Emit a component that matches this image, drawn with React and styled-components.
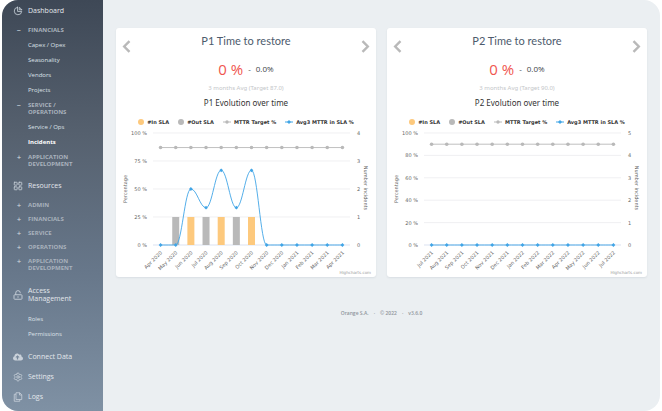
import React from "react";
import styled, { createGlobalStyle } from "styled-components";
import { FaCloudUploadAlt } from "react-icons/fa";
import { HiOutlineChartPie } from "react-icons/hi";
import { LayoutGrid, Settings } from "lucide-react";

const GlobalStyle = createGlobalStyle`
  * { box-sizing: border-box; }
  body { margin: 0; background: #fff; font-family: "Open Sans", "Noto Sans", sans-serif; }
  h2, h3, p { margin: 0; font-weight: 400; }
`;

const Shell = styled.div`
  display: flex;
  min-height: 100vh;
  margin: 0 2px;
  border-radius: 16px;
  overflow: hidden;
  background: #ebeff2;
`;

const Sidebar = styled.nav`
  flex: 0 0 101px;
  padding: 1px 0 4px;
  background: linear-gradient(#3e4856, #56616f 33%, #67778a 66%, #7f91a4);
`;

const NavLink = styled.a`
  display: flex;
  align-items: center;
  min-height: ${(p) => (p.$tall ? "24px" : "20px")};
  padding-left: 11px;
  gap: 5px;
  color: #e3e7ec;
  font-size: 7px;
  line-height: 8px;
  text-decoration: none;

  svg {
    flex: 0 0 10px;
    color: #c9d1da;
  }
`;

const Section = styled.div`
  padding: ${(p) => p.$pad || "0"};
`;

const GroupButton = styled.button`
  display: flex;
  width: 100%;
  gap: 6px;
  padding: ${(p) => (p.$tight ? "3px" : "4px")} 0 4px 15px;
  border: 0;
  background: none;
  color: #a9b2bd;
  font: 700 6px/7px "Open Sans", sans-serif;
  text-align: left;
  text-transform: uppercase;
`;

const Sign = styled.span`
  flex: 0 0 5px;
  font-size: 7px;
  color: #bcc4cd;
`;

const SubLink = styled.a`
  display: block;
  padding-left: 26px;
  color: ${(p) => (p.$active ? "#fff" : "#dde2e8")};
  font: ${(p) => (p.$active ? 700 : 400)} 6px/15px "Open Sans", sans-serif;
  text-decoration: none;
`;

const Main = styled.main`
  flex: 1;
  min-width: 0;
  padding: 28px 13px 0;
`;

const Cards = styled.div`
  display: grid;
  grid-template-columns: 1fr 1fr;
  gap: 11px;
`;

const Card = styled.section`
  display: flex;
  flex-direction: column;
  border-radius: 3px;
  background: #fff;
  box-shadow: 0 1px 2px rgba(60, 80, 100, 0.1);
`;

const CardHead = styled.header`
  display: flex;
  justify-content: space-between;
  padding: 6px 6px 0;
`;

const ArrowButton = styled.button`
  display: flex;
  align-items: flex-end;
  height: 19px;
  padding: 0;
  border: 0;
  background: none;
`;

const CardTitle = styled.h2`
  color: #4d5b6d;
  font-family: Lato, "Open Sans", sans-serif;
  font-size: 11px;
  line-height: 14px;
`;

const Score = styled.p`
  display: flex;
  justify-content: center;
  align-items: center;
  gap: 5px;
  padding-top: 7px;
  color: #3d434a;
  font-size: 8px;
  line-height: 18px;
`;

const ScoreValue = styled.strong`
  color: #f0564f;
  font-size: 15px;
  font-weight: 400;
`;

const Note = styled.p`
  padding-top: 5px;
  color: #c4c6c9;
  font-family: "Noto Sans", sans-serif;
  font-size: 6px;
  line-height: 10px;
  text-align: center;
`;

const ChartTitle = styled.h3`
  padding-top: 4px;
  color: #333;
  font-family: "Noto Sans", sans-serif;
  font-size: 8px;
  line-height: 12px;
  text-align: center;
`;

const Legend = styled.ul`
  display: flex;
  justify-content: center;
  gap: 9px;
  margin: 8px 0 0;
  padding: 0;
  list-style: none;
  color: #333;
  font-family: "DejaVu Sans", sans-serif;
  font-size: 5px;
  font-weight: 700;
  line-height: 10px;
`;

const LegendItem = styled.li`
  display: flex;
  align-items: center;
  gap: 3px;
  white-space: nowrap;
`;

const Dot = styled.span`
  width: 6px;
  height: 6px;
  border-radius: 50%;
  background: ${(p) => p.$color};
`;

const Plot = styled.svg`
  display: block;
  width: 100%;
  height: auto;
  font-family: "DejaVu Sans", sans-serif;
  font-size: 5px;
  fill: #666;
`;

const Footer = styled.footer`
  display: flex;
  justify-content: center;
  gap: 5px;
  padding-top: 31px;
  color: #8f959c;
  font-size: 5px;
  font-weight: 600;
  line-height: 10px;
`;

const GREY = "#b9b9b9";
const ORANGE = "#fdc97d";
const BLUE = "#41a5e6";

function LockIcon() {
  return (
    <svg width="10" height="10" viewBox="0 0 20 20" fill="none" stroke="currentColor" strokeWidth="1.8" aria-hidden="true">
      <rect x="2" y="9.5" width="16" height="9" rx="1.5" />
      <path d="M5.5 9.5V6a4.5 4.5 0 0 1 9-.5v1" />
      <path d="M10 12.5v3" />
    </svg>
  );
}

function PagesIcon() {
  return (
    <svg width="10" height="10" viewBox="0 0 20 20" fill="none" stroke="currentColor" strokeWidth="1.6" strokeLinejoin="round" aria-hidden="true">
      <path d="M6 1.5h7.5l4 4V15H6z" />
      <path d="M13 1.5V6h4.5" />
      <path d="M6 4.5H2.5v14h11V15" />
    </svg>
  );
}

function Chevron({ flip }) {
  return (
    <svg width="9" height="13" viewBox="0 0 9 13" aria-hidden="true">
      <path
        d={flip ? "M1.5 1.2 6.8 6.5 1.5 11.8" : "M7.5 1.2 2.2 6.5 7.5 11.8"}
        fill="none"
        stroke="#b9b9b9"
        strokeWidth="2.4"
      />
    </svg>
  );
}

function LineKey({ color, diamond }) {
  return (
    <svg width="8" height="6" viewBox="0 0 8 6" aria-hidden="true">
      <path d="M0 3H8" stroke={color} strokeWidth="1" />
      {diamond ? (
        <path d="M4 1 6 3 4 5 2 3Z" fill={color} />
      ) : (
        <circle cx="4" cy="3" r="1.7" fill={color} />
      )}
    </svg>
  );
}

const LEFT = 37;
const STEP = 197 / 13;
const TOP = 6;
const HEIGHT = 112;
const BASE = TOP + HEIGHT;
const xAt = (i) => LEFT + STEP * (i + 0.5);
const yAt = (v) => BASE - (v / 100) * HEIGHT;

/* Smooth curve through the points that never overshoots a peak or a trough. */
function splinePath(points) {
  let d = `M${points[0][0]} ${points[0][1]}`;
  let out = points[0];
  for (let i = 1; i < points.length; i++) {
    const [x, y] = points[i];
    const [px, py] = points[i - 1];
    const next = points[i + 1];
    let left = [x, y];
    let right = [x, y];
    if (next) {
      const [nx, ny] = next;
      left = [(1.5 * x + px) / 2.5, (1.5 * y + py) / 2.5];
      right = [(1.5 * x + nx) / 2.5, (1.5 * y + ny) / 2.5];
      const shift =
        ((right[1] - left[1]) * (right[0] - x)) / (right[0] - left[0]) * -1 + y - right[1] +
        (right[1] - left[1]);
      const slope = (right[1] - left[1]) / (right[0] - left[0]);
      left[1] = y - slope * (x - left[0]);
      right[1] = Number.isFinite(shift) ? y + slope * (right[0] - x) : y;
      const hiL = Math.max(py, y);
      const loL = Math.min(py, y);
      if (left[1] > hiL || left[1] < loL) {
        left[1] = left[1] > hiL ? hiL : loL;
        right[1] = 2 * y - left[1];
      }
      const hiR = Math.max(ny, y);
      const loR = Math.min(ny, y);
      if (right[1] > hiR || right[1] < loR) {
        right[1] = right[1] > hiR ? hiR : loR;
        left[1] = 2 * y - right[1];
      }
    }
    d += `C${out[0]} ${out[1]} ${left[0]} ${left[1]} ${x} ${y}`;
    out = right;
  }
  return d;
}

function Chart({ months, target, average, bars, ticks, counts }) {
  const points = average.map((v, i) => [xAt(i), yAt(v)]);
  return (
    <Plot viewBox="0 0 260 150" role="img" aria-label="Evolution over time">
      {ticks.map((t, i) => {
        const y = yAt(t);
        return (
          <g key={t}>
            <path d={`M${LEFT} ${y}H234`} stroke={t ? "#e9e9ec" : "#ccd6eb"} strokeWidth="0.7" />
            <text x="31" y={y + 2} textAnchor="end">{t} %</text>
            <text x="241" y={y + 2}>{counts[i]}</text>
          </g>
        );
      })}
      {bars.map(([i, color]) => (
        <rect key={i} x={xAt(i) - 3.5} y={yAt(25)} width="7" height={HEIGHT / 4} fill={color} />
      ))}
      <path d={`M${xAt(0)} ${yAt(target)}H${xAt(12)}`} stroke={GREY} strokeWidth="0.9" />
      <path d={splinePath(points)} fill="none" stroke={BLUE} strokeWidth="0.9" />
      {points.map(([x, y], i) => (
        <g key={months[i]}>
          <circle cx={x} cy={yAt(target)} r="1.8" fill={GREY} />
          <path d={`M${x - 1.9} ${y}l1.9-1.9 1.9 1.9-1.9 1.9z`} fill={BLUE} />
          <text transform={`translate(${x + 2} 126) rotate(-45)`} textAnchor="end">
            {months[i]}
          </text>
        </g>
      ))}
      <text transform="translate(11 62) rotate(-90)" textAnchor="middle">Percentage</text>
      <text transform="translate(248 61) rotate(90)" textAnchor="middle">Number incidents</text>
      <text x="255" y="147" textAnchor="end" fontSize="4" fill="#999">Highcharts.com</text>
    </Plot>
  );
}

function KpiCard({ name, target, ...chart }) {
  return (
    <Card>
      <CardHead>
        <ArrowButton aria-label="Previous"><Chevron /></ArrowButton>
        <CardTitle>{name} Time to restore</CardTitle>
        <ArrowButton aria-label="Next"><Chevron flip /></ArrowButton>
      </CardHead>
      <Score>
        <ScoreValue>0 %</ScoreValue>
        <span>-</span>
        <span>0.0%</span>
      </Score>
      <Note>3 months Avg (Target {target}.0)</Note>
      <ChartTitle>{name} Evolution over time</ChartTitle>
      <Legend>
        <LegendItem><Dot $color={ORANGE} />#In SLA</LegendItem>
        <LegendItem><Dot $color={GREY} />#Out SLA</LegendItem>
        <LegendItem><LineKey color={GREY} />MTTR Target %</LegendItem>
        <LegendItem><LineKey color={BLUE} diamond />Avg3 MTTR in SLA %</LegendItem>
      </Legend>
      <Chart target={target} {...chart} />
    </Card>
  );
}

const NAMES = ["Jan", "Feb", "Mar", "Apr", "May", "Jun", "Jul", "Aug", "Sep", "Oct", "Nov", "Dec"];
const monthsFrom = (start, year) =>
  Array.from({ length: 13 }, (_, i) => {
    const m = start + i;
    return `${NAMES[m % 12]} ${year + Math.floor(m / 12)}`;
  });

function Group({ open, tight, children }) {
  return (
    <GroupButton $tight={tight} aria-expanded={!!open}>
      <Sign>{open ? "−" : "+"}</Sign>
      <span>{children}</span>
    </GroupButton>
  );
}

export default function App() {
  return (
    <>
      <GlobalStyle />
      <Shell>
        <Sidebar>
          <NavLink href="#dashboard"><HiOutlineChartPie size={10} />Dashboard</NavLink>
          <Section $pad="2px 0 4px">
            <Group open>Financials</Group>
            <SubLink href="#capex">Capex / Opex</SubLink>
            <SubLink href="#seasonality">Seasonality</SubLink>
            <SubLink href="#vendors">Vendors</SubLink>
            <SubLink href="#projects">Projects</SubLink>
            <Group open>Service /<br />Operations</Group>
            <SubLink href="#service">Service / Ops</SubLink>
            <SubLink href="#incidents" $active>Incidents</SubLink>
            <Group>Application<br />Development</Group>
          </Section>
          <NavLink href="#resources"><LayoutGrid size={10} />Resources</NavLink>
          <Section $pad="3px 0 7px">
            <Group tight>Admin</Group>
            <Group tight>Financials</Group>
            <Group tight>Service</Group>
            <Group tight>Operations</Group>
            <Group tight>Application<br />Development</Group>
          </Section>
          <NavLink href="#access" $tall><LockIcon /><span>Access<br />Management</span></NavLink>
          <Section $pad="5px 0">
            <SubLink href="#roles">Roles</SubLink>
            <SubLink href="#permissions">Permissions</SubLink>
          </Section>
          <NavLink href="#connect"><FaCloudUploadAlt size={10} />Connect Data</NavLink>
          <NavLink href="#settings"><Settings size={10} />Settings</NavLink>
          <NavLink href="#logs"><PagesIcon />Logs</NavLink>
        </Sidebar>
        <Main>
          <Cards>
            <KpiCard
              name="P1"
              target={87}
              months={monthsFrom(3, 2020)}
              average={[0, 0, 50, 33.3, 66.7, 33.3, 66.7, 0, 0, 0, 0, 0, 0]}
              bars={[[1, GREY], [2, ORANGE], [3, GREY], [4, ORANGE], [5, GREY], [6, ORANGE]]}
              ticks={[100, 75, 50, 25, 0]}
              counts={[4, 3, 2, 1, 0]}
            />
            <KpiCard
              name="P2"
              target={90}
              months={monthsFrom(6, 2021)}
              average={Array(13).fill(0)}
              bars={[]}
              ticks={[100, 80, 60, 40, 20, 0]}
              counts={[5, 4, 3, 2, 1, 0]}
            />
          </Cards>
          <Footer>
            <span>Orange S.A.</span>
            <span>·</span>
            <span>© 2022</span>
            <span>·</span>
            <span>v3.6.0</span>
          </Footer>
        </Main>
      </Shell>
    </>
  );
}
